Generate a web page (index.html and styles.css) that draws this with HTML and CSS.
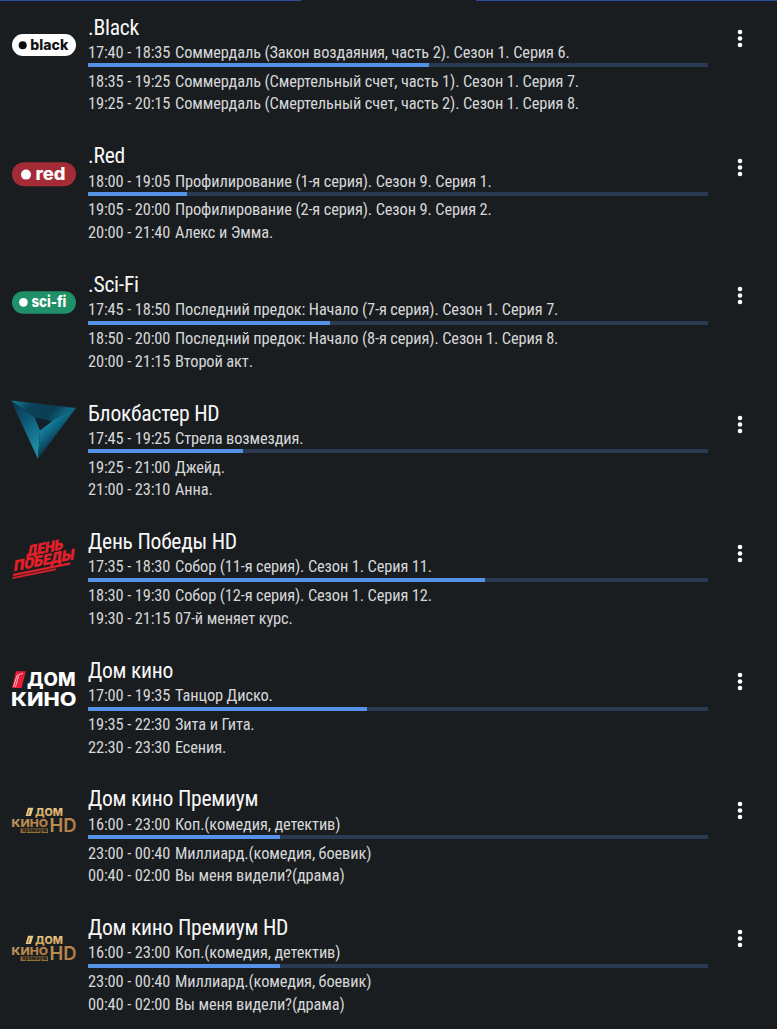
FILE: index.html
```html
<!DOCTYPE html>
<html lang="ru">
<head>
<meta charset="utf-8">
<title>Телепрограмма</title>
<link rel="stylesheet" href="styles.css">
</head>
<body>
<svg class="defs" width="0" height="0" aria-hidden="true">
  <defs>
    <linearGradient id="t1" x1="0" y1="0" x2="1" y2="0.3"><stop offset="0" stop-color="#177f9a"/><stop offset="0.35" stop-color="#0b4259"/><stop offset="0.7" stop-color="#0a3d53"/><stop offset="1" stop-color="#14708c"/></linearGradient>
    <linearGradient id="t2" x1="0" y1="0" x2="0.5" y2="1"><stop offset="0" stop-color="#0a3146"/><stop offset="0.5" stop-color="#0d5a76"/><stop offset="1" stop-color="#1f8aa3"/></linearGradient>
    <linearGradient id="t3" x1="0.35" y1="0.25" x2="0.62" y2="0.62"><stop offset="0" stop-color="#14809c"/><stop offset="0.45" stop-color="#0d5d79"/><stop offset="1" stop-color="#08293b"/></linearGradient>
    <linearGradient id="gold" x1="0" y1="0" x2="0" y2="1"><stop offset="0" stop-color="#f0d08a"/><stop offset="1" stop-color="#c99554"/></linearGradient>
    <linearGradient id="bronze" x1="0" y1="0" x2="1" y2="1"><stop offset="0" stop-color="#c69a5c"/><stop offset="1" stop-color="#a5723b"/></linearGradient>
    <symbol id="dots" viewBox="0 0 6 20"><circle cx="3" cy="3" r="2.3"/><circle cx="3" cy="9.5" r="2.3"/><circle cx="3" cy="16" r="2.3"/></symbol>
    <symbol id="premium" viewBox="0 0 66 66">
      <path d="M17 22.8h5.4l-2.5 8.2h-5.3z" fill="#e8c680"/>
      <path d="M18.6 25l-1.4 5" stroke="#5a4424" stroke-width=".7"/>
      <text class="heavy" x="24" y="31" font-size="10.8" textLength="28" lengthAdjust="spacingAndGlyphs" fill="url(#gold)">ДОМ</text>
      <text class="heavy" x="0.5" y="42.3" font-size="10.8" textLength="36.5" lengthAdjust="spacingAndGlyphs" fill="url(#bronze)">КИНО</text>
      <rect x="9.5" y="43.5" width="27.5" height="4.5" fill="#94703f"/>
      <text class="heavy" x="11" y="47.2" font-size="5" textLength="25" lengthAdjust="spacingAndGlyphs" fill="#221c14">премиум</text>
      <text class="medium" x="38.5" y="47.4" font-size="18.8" textLength="27" lengthAdjust="spacingAndGlyphs" fill="url(#bronze)">HD</text>
    </symbol>
  </defs>
</svg>
<div class="topline"><i></i><i></i></div>
<main class="channels">
  <article class="channel">
    <svg class="logo" viewBox="0 0 66 66"><rect x="1" y="21" width="64" height="22" rx="11" fill="#fff"/><circle cx="11.7" cy="32.2" r="4" fill="#0b0d0e"/><text class="heavy" x="19.3" y="36.7" font-size="14" textLength="38" lengthAdjust="spacingAndGlyphs" fill="#111314">black</text></svg>
    <div class="guide"><h2>.Black</h2><p><time>17:40 - 18:35</time><span>Соммердаль (Закон воздаяния, часть 2). Сезон 1. Серия 6.</span></p><div class="bar"><i style="width:341px"></i></div><p><time>18:35 - 19:25</time><span>Соммердаль (Смертельный счет, часть 1). Сезон 1. Серия 7.</span></p><p><time>19:25 - 20:15</time><span>Соммердаль (Смертельный счет, часть 2). Сезон 1. Серия 8.</span></p></div>
    <svg class="more"><use href="#dots"/></svg>
  </article>
  <article class="channel">
    <svg class="logo" viewBox="0 0 66 66"><rect x="1" y="20.2" width="64" height="24" rx="12" fill="#a32c36"/><circle cx="15" cy="32.6" r="5" fill="#fff"/><text class="heavy" x="24.5" y="37.5" font-size="17" textLength="30" lengthAdjust="spacingAndGlyphs" fill="#fff">red</text></svg>
    <div class="guide"><h2>.Red</h2><p><time>18:00 - 19:05</time><span>Профилирование (1-я серия). Сезон 9. Серия 1.</span></p><div class="bar"><i style="width:99px"></i></div><p><time>19:05 - 20:00</time><span>Профилирование (2-я серия). Сезон 9. Серия 2.</span></p><p><time>20:00 - 21:40</time><span>Алекс и Эмма.</span></p></div>
    <svg class="more"><use href="#dots"/></svg>
  </article>
  <article class="channel">
    <svg class="logo" viewBox="0 0 66 66"><rect x="1" y="21.2" width="64" height="22.6" rx="11.3" fill="#209068"/><circle cx="12.4" cy="32.4" r="4.3" fill="#fff"/><text class="heavy" x="20.4" y="36.7" font-size="15" textLength="35" lengthAdjust="spacingAndGlyphs" fill="#fff">sci-fi</text></svg>
    <div class="guide"><h2>.Sci-Fi</h2><p><time>17:45 - 18:50</time><span>Последний предок: Начало (7-я серия). Сезон 1. Серия 7.</span></p><div class="bar"><i style="width:242px"></i></div><p><time>18:50 - 20:00</time><span>Последний предок: Начало (8-я серия). Сезон 1. Серия 8.</span></p><p><time>20:00 - 21:15</time><span>Второй акт.</span></p></div>
    <svg class="more"><use href="#dots"/></svg>
  </article>
  <article class="channel">
    <svg class="logo" viewBox="0 0 66 66"><path d="M0 1.5L24 18.7l5 12.6L27 60z" fill="url(#t2)"/><path d="M0 1.5L65 9 39 24 24 18.7z" fill="url(#t1)"/><path d="M65 9L27 60l2-28.7L41 22z" fill="url(#t3)"/><path d="M24 18.7L41 22 29 31.3z" fill="#15202a"/></svg>
    <div class="guide"><h2>Блокбастер HD</h2><p><time>17:45 - 19:25</time><span>Стрела возмездия.</span></p><div class="bar"><i style="width:155px"></i></div><p><time>19:25 - 21:00</time><span>Джейд.</span></p><p><time>21:00 - 23:10</time><span>Анна.</span></p></div>
    <svg class="more"><use href="#dots"/></svg>
  </article>
  <article class="channel">
    <svg class="logo" viewBox="0 0 66 66"><g fill="#e5202b" stroke="#e5202b" transform="matrix(1 -.2 -.12 1 0 0)"><text class="victory" x="19.5" y="32.4" font-size="15" textLength="36" lengthAdjust="spacingAndGlyphs">ДЕНЬ</text><text class="victory" x="8" y="44.8" font-size="15" textLength="60" lengthAdjust="spacingAndGlyphs">ПОБЕДЫ</text><path d="M8 47.6h57v1.9H8zM8 50.8h43v1.5H8z" stroke-width=".3"/></g></svg>
    <div class="guide"><h2>День Победы HD</h2><p><time>17:35 - 18:30</time><span>Собор (11-я серия). Сезон 1. Серия 11.</span></p><div class="bar"><i style="width:397px"></i></div><p><time>18:30 - 19:30</time><span>Собор (12-я серия). Сезон 1. Серия 12.</span></p><p><time>19:30 - 21:15</time><span>07-й меняет курс.</span></p></div>
    <svg class="more"><use href="#dots"/></svg>
  </article>
  <article class="channel">
    <svg class="logo" viewBox="0 0 66 66"><path d="M5 15.2h9.8L10.6 32H1z" fill="#e51e3c"/><path d="M2.5 31L6 19.5l6-2.2M4.5 31L7.5 20" fill="none" stroke="#f6c9d0" stroke-width=".9"/><text class="heavy" x="16" y="29.5" font-size="18.5" textLength="48.5" lengthAdjust="spacingAndGlyphs" fill="#fff">ДОМ</text><text class="heavy" x="0" y="49.5" font-size="18.5" textLength="65.5" lengthAdjust="spacingAndGlyphs" fill="#fff">КИНО</text></svg>
    <div class="guide"><h2>Дом кино</h2><p><time>17:00 - 19:35</time><span>Танцор Диско.</span></p><div class="bar"><i style="width:279px"></i></div><p><time>19:35 - 22:30</time><span>Зита и Гита.</span></p><p><time>22:30 - 23:30</time><span>Есения.</span></p></div>
    <svg class="more"><use href="#dots"/></svg>
  </article>
  <article class="channel">
    <svg class="logo"><use href="#premium"/></svg>
    <div class="guide"><h2>Дом кино Премиум</h2><p><time>16:00 - 23:00</time><span>Коп.(комедия, детектив)</span></p><div class="bar"><i style="width:192px"></i></div><p><time>23:00 - 00:40</time><span>Миллиард.(комедия, боевик)</span></p><p><time>00:40 - 02:00</time><span>Вы меня видели?(драма)</span></p></div>
    <svg class="more"><use href="#dots"/></svg>
  </article>
  <article class="channel">
    <svg class="logo"><use href="#premium"/></svg>
    <div class="guide"><h2>Дом кино Премиум HD</h2><p><time>16:00 - 23:00</time><span>Коп.(комедия, детектив)</span></p><div class="bar"><i style="width:192px"></i></div><p><time>23:00 - 00:40</time><span>Миллиард.(комедия, боевик)</span></p><p><time>00:40 - 02:00</time><span>Вы меня видели?(драма)</span></p></div>
    <svg class="more"><use href="#dots"/></svg>
  </article>
</main>
</body>
</html>
```

FILE: styles.css
```css
* { box-sizing: border-box; }
html, body { margin: 0; height: 1029px; overflow: hidden; }
body {
  background: #1a1d20;
  color: #d6d7d8;
  font-family: "Roboto Condensed", Roboto, sans-serif;
  font-stretch: 75%;
}
.defs { display: block; }
.topline { display: flex; justify-content: space-between; height: 1px; }
.topline i { height: 1px; background: #2a4d9c; width: 301px; }
.channels { display: flex; flex-direction: column; }
.channel {
  display: grid;
  grid-template-columns: 66px 620px 6px;
  column-gap: 11px;
  padding-left: 11px;
  height: 128.64px;
  flex: none;
}
.logo { width: 66px; height: 66px; margin-top: 12px; overflow: visible; }
.guide { padding-top: 12.7px; }
h2 {
  margin: 0;
  height: 27.3px;
  line-height: 28px;
  font-size: 21.6px;
  letter-spacing: -0.25px;
  font-weight: 400;
  color: #f7f7f7;
  white-space: nowrap;
}
p {
  display: flex;
  margin: 0;
  height: 22.6px;
  line-height: 23.2px;
  font-size: 16.4px;
  letter-spacing: -0.13px;
  white-space: nowrap;
}
time { width: 87px; flex: none; }
.bar { height: 4px; margin: -0.2px 0 2.4px; background: #2a3a52; }
.bar i { display: block; height: 4px; background: #5691e8; }
.more { width: 6px; height: 20px; margin: 28px 0 0 17.5px; fill: #fff; }
.heavy, .medium, .victory { font-stretch: 100%; letter-spacing: 0; }
.heavy { font-family: Inter, "Open Sans", sans-serif; font-weight: 800; }
.medium { font-family: Inter, "Open Sans", sans-serif; font-weight: 600; }
.victory { font-family: Roboto, sans-serif; font-weight: 900; stroke-width: .4; }
```
